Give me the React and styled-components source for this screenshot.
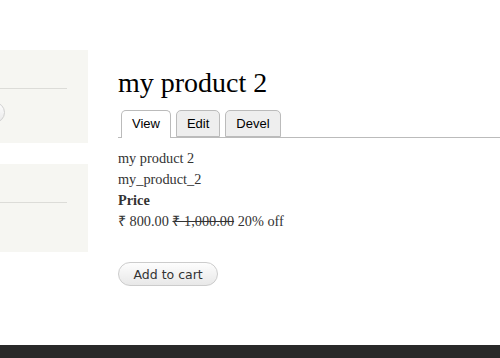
import React from 'react'
import styled, { createGlobalStyle } from 'styled-components'

const GlobalStyle = createGlobalStyle`
    html, body {
        margin: 0;
        padding: 0;
        background: #fff;
    }
    body {
        font-family: 'Liberation Serif', serif;
        color: #333;
    }
`

const Page = styled.div`
    width: 500px;
    height: 358px;
    overflow: hidden;
    display: flex;
    flex-direction: column;
`

const Layout = styled.div`
    flex: 1;
    display: flex;
    gap: 30px;
    padding-top: 50px;
`

const Sidebar = styled.aside`
    width: 88px;
    flex-shrink: 0;
    display: flex;
    flex-direction: column;
    gap: 21px;
`

const Block = styled.div`
    background: #f6f6f2;
    height: ${props => props.height}px;
    box-sizing: border-box;
    padding: 38px 21px 0 0;
`

const BlockRule = styled.div`
    height: 1px;
    background: #dcdcd8;
`

const CutButton = styled.div`
    width: 40px;
    height: 21px;
    margin: 13px 0 0 -35px;
    box-sizing: border-box;
    border: 1px solid #d0d0d0;
    border-radius: 11px;
    background: linear-gradient(#fefefe, #e9e9e9);
`

const Main = styled.main`
    flex: 1;
    padding-top: 17px;
`

const Title = styled.h1`
    margin: 0 0 11px;
    font-family: 'Liberation Serif', serif;
    font-weight: normal;
    font-size: 28px;
    line-height: 32px;
    color: #000;
`

const Tabs = styled.ul`
    display: flex;
    gap: 5px;
    margin: 0;
    padding: 0 0 0 3px;
    list-style: none;
    border-bottom: 1px solid #bbb;
    height: 27px;
`

const Tab = styled.li`
    box-sizing: border-box;
    height: ${props => (props.active ? 28 : 27)}px;
    padding: 5px 10px 0;
    border: 1px solid #bbb;
    border-bottom: ${props => (props.active ? 'none' : '1px solid #bbb')};
    border-radius: 5px 5px 0 0;
    background: ${props => (props.active ? '#fff' : '#eee')};
    font-family: 'Liberation Sans', Arial, sans-serif;
    font-size: 13px;
    line-height: 15px;
    color: #000;
`

const Body = styled.div`
    margin-top: 10px;
    font-size: 14.3px;
    line-height: 21px;
`

const Line = styled.div`
    font-weight: ${props => (props.bold ? 'bold' : 'normal')};
`

const Old = styled.s`
    text-decoration: line-through;
`

const CartButton = styled.button`
    margin-top: 30px;
    height: 24px;
    padding: 0 14.5px;
    border: 1px solid #ccc;
    border-radius: 12px;
    background: linear-gradient(#fdfdfd, #e8e8e8);
    font-family: 'DejaVu Sans', Verdana, sans-serif;
    font-size: 12.5px;
    color: #333;
    cursor: pointer;
`

const Footer = styled.footer`
    height: 13px;
    background: #292929;
`

const App = () => {
    return (
        <Page>
            <GlobalStyle />
            <Layout>
                <Sidebar>
                    <Block height={93}>
                        <BlockRule />
                        <CutButton />
                    </Block>
                    <Block height={88}>
                        <BlockRule />
                    </Block>
                </Sidebar>
                <Main>
                    <Title>my product 2</Title>
                    <Tabs>
                        <Tab active>View</Tab>
                        <Tab>Edit</Tab>
                        <Tab>Devel</Tab>
                    </Tabs>
                    <Body>
                        <Line>my product 2</Line>
                        <Line>my_product_2</Line>
                        <Line bold>Price</Line>
                        <Line>₹ 800.00 <Old>₹ 1,000.00</Old> 20% off</Line>
                        <CartButton>Add to cart</CartButton>
                    </Body>
                </Main>
            </Layout>
            <Footer />
        </Page>
    )
}

export default App
